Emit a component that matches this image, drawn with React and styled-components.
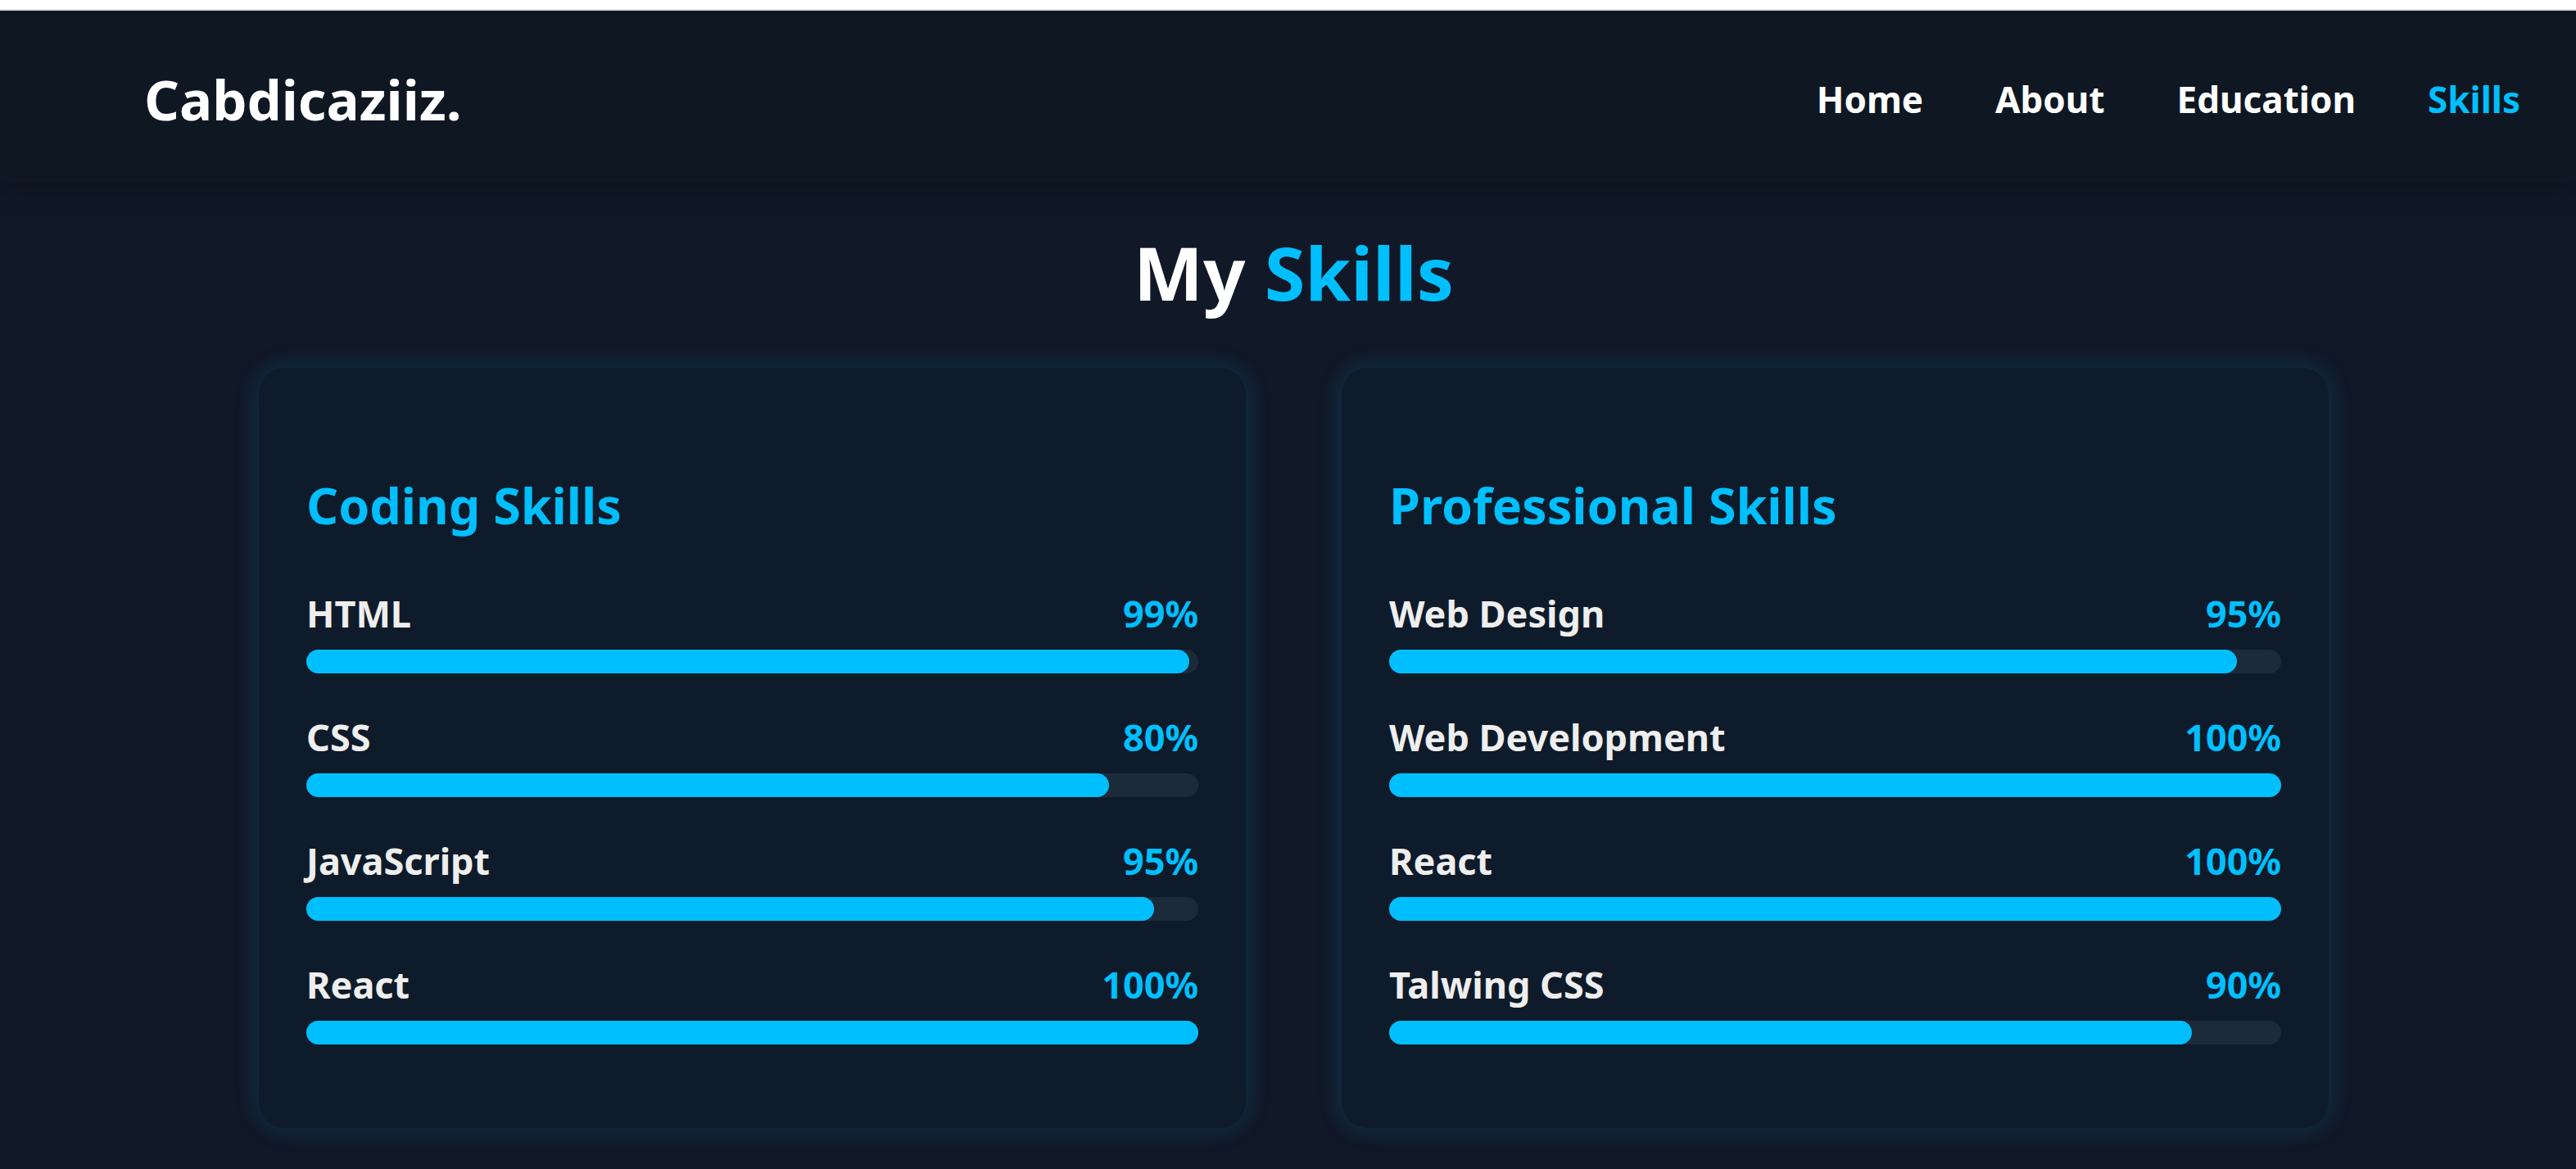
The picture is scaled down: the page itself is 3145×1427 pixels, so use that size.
import React from 'react';
import styled, { createGlobalStyle } from 'styled-components';

const GlobalStyle = createGlobalStyle`
  * { box-sizing: border-box; }
  body {
    margin: 0;
    background: #111827;
    color: #ffffff;
    font-family: "Noto Sans", "Open Sans", sans-serif;
  }
`;

const Page = styled.div`
  min-height: 100vh;
  overflow: hidden;
`;

const TopStrip = styled.div`
  position: relative;
  z-index: 1;
  height: 13px;
  border-bottom: 2px solid #dce4de;
  background: #ffffff;
`;

const Header = styled.header`
  display: flex;
  align-items: center;
  justify-content: space-between;
  padding: 60px 68px 54px 176px;
  background: #0f1723;
  box-shadow: 0 6px 30px rgba(0, 0, 0, 0.3);
`;

const Logo = styled.a`
  color: #ffffff;
  font-size: 67px;
  font-weight: 700;
  line-height: 96px;
  text-decoration: none;
`;

const Nav = styled.nav`
  display: flex;
  gap: 88px;
`;

const NavLink = styled.a`
  color: ${({ $active }) => ($active ? '#00bfff' : '#ffffff')};
  font-size: 44px;
  font-weight: 700;
  line-height: 60px;
  text-decoration: none;
`;

const Section = styled.main`
  padding: 44px 302px 48px 316px;
`;

const Title = styled.h1`
  margin: 0 0 52px;
  font-size: 90px;
  font-weight: 700;
  line-height: 130px;
  text-align: center;
`;

const Accent = styled.span`
  color: #00bfff;
`;

const Columns = styled.div`
  display: grid;
  grid-template-columns: 1fr 1fr;
  gap: 117px;
`;

const Card = styled.section`
  padding: 124px 58px 102px;
  border-radius: 32px;
  background: #0e1b2a;
  box-shadow: 0 0 30px rgba(0, 191, 255, 0.2);
`;

const CardTitle = styled.h2`
  margin: 0 0 58px;
  color: #00bfff;
  font-size: 61px;
  font-weight: 700;
  line-height: 88px;
`;

const SkillList = styled.div`
  display: grid;
  gap: 48px;
`;

const SkillLabel = styled.div`
  display: flex;
  justify-content: space-between;
  margin-bottom: 14px;
  color: #eeeeee;
  font-size: 45px;
  font-weight: 700;
  line-height: 60px;
`;

const Track = styled.div`
  height: 29px;
  border-radius: 15px;
  background: #1c2b39;
`;

const Fill = styled.div`
  height: 100%;
  border-radius: inherit;
  background: #00bfff;
`;

const links = ['Home', 'About', 'Education', 'Skills'];

const groups = [
  {
    title: 'Coding Skills',
    skills: [
      { name: 'HTML', value: 99, fill: 99 },
      { name: 'CSS', value: 80, fill: 90 },
      { name: 'JavaScript', value: 95, fill: 95 },
      { name: 'React', value: 100, fill: 100 },
    ],
  },
  {
    title: 'Professional Skills',
    skills: [
      { name: 'Web Design', value: 95, fill: 95 },
      { name: 'Web Development', value: 100, fill: 100 },
      { name: 'React', value: 100, fill: 100 },
      { name: 'Talwing CSS', value: 90, fill: 90 },
    ],
  },
];

function Skill({ name, value, fill }) {
  return (
    <div>
      <SkillLabel><span>{name}</span><Accent>{value}%</Accent></SkillLabel>
      <Track role="progressbar" aria-label={name} aria-valuenow={value} aria-valuemin={0} aria-valuemax={100}>
        <Fill style={{ width: `${fill}%` }} />
      </Track>
    </div>
  );
}

export default function App() {
  return (
    <Page>
      <GlobalStyle />
      <TopStrip />
      <Header>
        <Logo href="#home">Cabdicaziiz.</Logo>
        <Nav aria-label="Main">
          {links.map((link) => (
            <NavLink key={link} href={`#${link.toLowerCase()}`} $active={link === 'Skills'}>{link}</NavLink>
          ))}
        </Nav>
      </Header>
      <Section id="skills">
        <Title>My <Accent>Skills</Accent></Title>
        <Columns>
          {groups.map((group) => (
            <Card key={group.title}>
              <CardTitle>{group.title}</CardTitle>
              <SkillList>
                {group.skills.map((skill) => <Skill key={skill.name} {...skill} />)}
              </SkillList>
            </Card>
          ))}
        </Columns>
      </Section>
    </Page>
  );
}
